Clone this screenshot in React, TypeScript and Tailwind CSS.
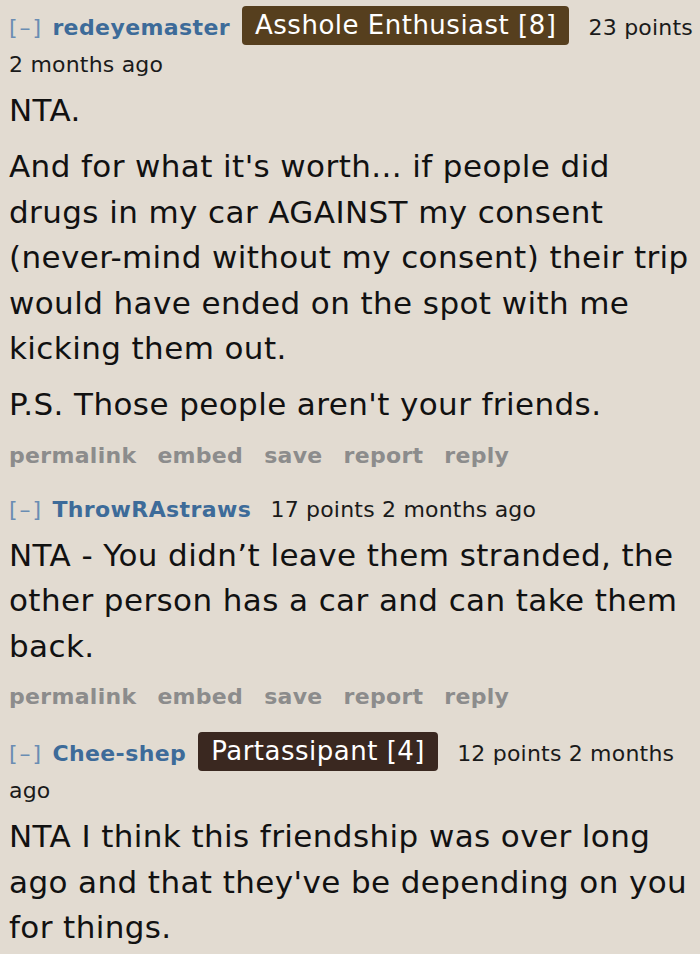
import React from "react";

type Comment = {
  author: string;
  flair?: { text: string; bg: string };
  points: number;
  age: string;
  paragraphs: string[];
  actions: boolean;
};

const COMMENTS: Comment[] = [
  {
    author: "redeyemaster",
    flair: { text: "Asshole Enthusiast [8]", bg: "bg-[#563f1e]" },
    points: 23,
    age: "2 months ago",
    paragraphs: [
      "NTA.",
      "And for what it's worth... if people did drugs in my car AGAINST my consent (never-mind without my consent) their trip would have ended on the spot with me kicking them out.",
      "P.S. Those people aren't your friends.",
    ],
    actions: true,
  },
  {
    author: "ThrowRAstraws",
    points: 17,
    age: "2 months ago",
    paragraphs: [
      "NTA - You didn\u2019t leave them stranded, the other person has a car and can take them back.",
    ],
    actions: true,
  },
  {
    author: "Chee-shep",
    flair: { text: "Partassipant [4]", bg: "bg-[#3a2820]" },
    points: 12,
    age: "2 months ago",
    paragraphs: [
      "NTA I think this friendship was over long ago and that they've be depending on you for things.",
    ],
    actions: false,
  },
];

const ACTIONS = ["permalink", "embed", "save", "report", "reply"];

function Tagline({ c }: { c: Comment }) {
  return (
    <div className="text-[22px] leading-[37px] tracking-[0.2px] text-[#1a1a1a]">
      <span className="tracking-[2px] text-[#6a8db3]">[–]</span>{" "}
      <span className="ml-[2px] font-bold tracking-[0.4px] text-[#3d6b99]">{c.author}</span>
      {c.flair && (
        <span
          className={`ml-[12px] inline-block rounded-[4px] px-[13px] align-[1px] text-[26px] leading-[39px] tracking-[0.5px] text-white ${c.flair.bg}`}
        >
          {c.flair.text}
        </span>
      )}{" "}
      <span className="ml-[12px]">
        {c.points} points {c.age}
      </span>
    </div>
  );
}

function CommentBlock({ c }: { c: Comment }) {
  return (
    <div>
      <Tagline c={c} />
      <div className="mt-[5px] flex flex-col gap-[10.5px] text-[31px] leading-[45.5px] tracking-[0.4px] text-[#111111]">
        {c.paragraphs.map((p, i) => (
          <p key={i}>{p}</p>
        ))}
      </div>
      {c.actions && (
        <div className="mt-[13px] flex gap-[21px] text-[22px] font-bold leading-[30px] tracking-[0.3px] text-[#8c8c8c]">
          {ACTIONS.map((a) => (
            <span key={a}>{a}</span>
          ))}
        </div>
      )}
    </div>
  );
}

export default function App() {
  return (
    <div className="min-h-[954px] w-[700px] overflow-hidden bg-[#e2dbd1] pl-[9px] pr-[3px] pt-[6px] font-['DejaVu_Sans',sans-serif]">
      <div className="flex flex-col gap-[20px]">
        {COMMENTS.map((c) => (
          <CommentBlock key={c.author} c={c} />
        ))}
      </div>
    </div>
  );
}
